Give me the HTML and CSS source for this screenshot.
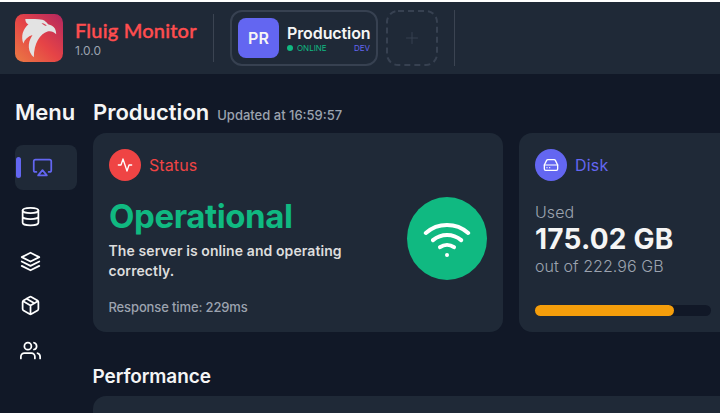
FILE: index.html
```html
<!DOCTYPE html>
<html lang="en">
<head>
<meta charset="utf-8">
<title>Fluig Monitor</title>
<link rel="stylesheet" href="styles.css">
</head>
<body>
<header class="topbar">
  <div class="brand">
    <svg class="logo" viewBox="0 0 48 48">
      <defs>
        <linearGradient id="lg" x1="0" y1="1" x2="1" y2="0">
          <stop offset="0" stop-color="#ea7b43"/><stop offset=".48" stop-color="#e64446"/><stop offset="1" stop-color="#b3265f"/>
        </linearGradient>
      </defs>
      <rect width="48" height="48" rx="8.500" fill="url(#lg)"/>
      <path fill="#e3e3e3" d="M10.300 5C16 5.300 22 4.200 27.500 5.800C30.200 6.700 31.500 8.500 33 10.200C37 11.200 41.300 13.300 41.200 20.300C38.500 17.400 35.500 16.600 32.500 17.500C25 20 19 29 18.800 43.300C13 38 11.800 29.500 17.500 21C13 22.500 9.800 25 8.300 29.500C5.800 22.500 7.700 15.300 13.400 10.300C11.300 9.300 10.300 7.500 10.300 5Z"/>
      <path d="M26.500 9.300C28.500 8.800 30.200 9.700 31.800 12C29.500 11.900 28.200 10.600 26.500 9.300Z" fill="#d4485a"/>
    </svg>
    <div>
      <div class="brand-name">Fluig Monitor</div>
      <div class="version">1.0.0</div>
    </div>
  </div>
  <div class="divider first"></div>
  <div class="env">
    <div class="env-badge">PR</div>
    <div class="env-info">
      <div class="env-name">Production</div>
      <div class="env-meta"><span class="online"><i class="dot"></i>ONLINE</span><span class="kind">DEV</span></div>
    </div>
  </div>
  <div class="add">
    <svg class="dash" viewBox="0 0 52 56"><rect x="1" y="1" width="50" height="54" rx="11"/></svg>
    <svg class="plus" viewBox="0 0 12 12"><path d="M6 .5v11M.5 6h11"/></svg>
  </div>
  <div class="divider second"></div>
</header>
<div class="layout">
  <nav class="menu">
    <h2 class="menu-title">Menu</h2>
    <a class="item active"><span class="marker"></span><svg class="icon" viewBox="0 0 24 24"><path d="M5 17H4a2 2 0 0 1-2-2V5a2 2 0 0 1 2-2h16a2 2 0 0 1 2 2v10a2 2 0 0 1-2 2h-1"/><path d="M12 15l5 6H7z"/></svg></a>
    <a class="item"><svg class="icon" viewBox="0 0 24 24"><ellipse cx="12" cy="5" rx="9" ry="3"/><path d="M21 12c0 1.660-4 3-9 3s-9-1.340-9-3M3 5v14c0 1.660 4 3 9 3s9-1.340 9-3V5"/></svg></a>
    <a class="item"><svg class="icon" viewBox="0 0 24 24"><path d="M12 2L2 7l10 5 10-5zM2 17l10 5 10-5M2 12l10 5 10-5"/></svg></a>
    <a class="item"><svg class="icon" viewBox="0 0 24 24"><path d="M16.500 9.400l-9-5.190M21 16V8a2 2 0 0 0-1-1.730l-7-4a2 2 0 0 0-2 0l-7 4A2 2 0 0 0 3 8v8a2 2 0 0 0 1 1.730l7 4a2 2 0 0 0 2 0l7-4A2 2 0 0 0 21 16zM3.270 6.960L12 12.010l8.730-5.050M12 22.080V12"/></svg></a>
    <a class="item"><svg class="icon" viewBox="0 0 24 24"><path d="M17 21v-2a4 4 0 0 0-4-4H5a4 4 0 0 0-4 4v2M23 21v-2a4 4 0 0 0-3-3.870M16 3.130a4 4 0 0 1 0 7.750"/><circle cx="9" cy="7" r="4"/></svg></a>
  </nav>
  <main class="content">
    <div class="heading"><h1 class="title">Production</h1><span class="updated">Updated at 16:59:57</span></div>
    <div class="cards">
      <section class="card status">
        <div class="card-head red"><span class="round"><svg viewBox="0 0 24 24"><path d="M22 12h-4l-3 9L9 3l-3 9H2"/></svg></span><span class="status-label">Status</span></div>
        <div class="status-body">
          <div>
            <div class="state">Operational</div>
            <p class="desc">The server is online and operating correctly.</p>
            <div class="response">Response time: 229ms</div>
          </div>
          <div class="wifi"><svg viewBox="0 0 24 24"><path d="M5 12.550a11 11 0 0 1 14.080 0M1.420 9a16 16 0 0 1 21.160 0M8.530 16.110a6 6 0 0 1 6.950 0M12 20h.01"/></svg></div>
        </div>
      </section>
      <section class="card disk">
        <div class="card-head indigo"><span class="round"><svg viewBox="0 0 24 24"><path d="M22 12H2" opacity=".7"/><path d="M5.450 5.110L2 12v6a2 2 0 0 0 2 2h16a2 2 0 0 0 2-2v-6l-3.450-6.890A2 2 0 0 0 16.760 4H7.240a2 2 0 0 0-1.790 1.110zM6 16h.01M10 16h.01"/></svg></span><span class="disk-label">Disk</span></div>
        <div class="used">Used</div>
        <div class="amount">175.02 GB</div>
        <div class="total">out of 222.96 GB</div>
        <div class="track"><div class="fill" style="width:78.900%"></div></div>
      </section>
    </div>
    <h2 class="section-title">Performance</h2>
    <section class="card performance"></section>
  </main>
</div>
</body>
</html>
```
FILE: styles.css
```css
* { box-sizing: border-box; }
body { margin: 0; height: 413px; overflow: hidden; background: #111827; border-top: 2px solid #fff; color: #f5f5f5; font-family: Inter, sans-serif; }
h1, h2, p { margin: 0; }
svg { display: block; fill: none; stroke: currentColor; stroke-width: 2; stroke-linecap: round; stroke-linejoin: round; }
.topbar { height: 72px; background: #1f2937; display: flex; align-items: flex-start; padding: 8px 0 0 15px; }
.brand { display: flex; gap: 12px; width: 198px; padding-top: 4px; }
.logo { width: 48px; height: 48px; stroke: none; }
.brand-name { font: 500 20px/24px Lato, Inter, sans-serif; letter-spacing: .2px; color: #ff4d4f; -webkit-text-stroke: .4px #ff4d4f; white-space: nowrap; padding-top: 5px; margin-top: -1px; margin-bottom: 1px; }
.version { font-size: 12px; line-height: 16px; color: #9ca3af; }
.divider { width: 1px; background: #3b4452; }
.first { height: 48px; margin-top: 4px; }
.second { height: 56px; margin-left: 16px; }
.env { width: 148px; height: 56px; margin-left: 16px; border: 2px solid #374151; border-radius: 12px; padding: 6px; display: flex; gap: 8px; }
.env-badge { width: 41px; height: 40px; flex: none; border-radius: 8px; background: #6366f1; display: flex; align-items: center; justify-content: center; font-size: 16px; font-weight: 600; }
.env-info { width: 83px; padding-top: 5px; }
.env-name { font-size: 16px; font-weight: 600; line-height: 20px; letter-spacing: -.1px; white-space: nowrap; }
.env-meta { display: flex; justify-content: space-between; font-size: 8px; line-height: 10px; }
.online { color: #10b981; display: flex; align-items: center; gap: 4px; }
.dot { width: 6px; height: 6px; border-radius: 50%; background: #10b981; }
.kind { color: #6366f1; }
.add { display: grid; width: 52px; height: 56px; margin-left: 8px; place-items: center; color: #374151; }
.add svg { grid-area: 1 / 1; }
.dash { width: 52px; height: 56px; stroke-dasharray: 6 4; stroke-linecap: butt; }
.plus { width: 12px; height: 12px; stroke-width: 1; }
.layout { display: flex; padding-left: 15px; gap: 16px; }
.menu { width: 62px; flex: none; }
.menu-title { font-size: 22px; font-weight: 600; line-height: 28px; margin: 24px 0 19px; }
.item { display: flex; align-items: center; height: 44.700px; padding-left: 5px; color: #fff; }
.active { height: 45px; background: #1f2937; color: #6366f1; border-radius: 8px; padding-left: 1px; margin-bottom: 4px; }
.marker { width: 5px; height: 21px; border-radius: 3px; background: #6366f1; margin-right: 11px; }
.icon { width: 21px; height: 21px; }
.content { width: 676px; flex: none; }
.heading { display: flex; align-items: baseline; gap: 9px; height: 35px; margin-top: 24px; }
.title { font-size: 22px; font-weight: 600; line-height: 28px; }
.updated { font-size: 13px; font-weight: 500; color: #9ca3af; margin-left: -1px; }
.cards { display: flex; gap: 16px; }
.card { background: #1f2937; border-radius: 13px; }
.status { width: 410px; height: 199px; padding: 16px; }
.disk { width: 250px; height: 199px; padding: 16px; }
.card-head { display: flex; align-items: center; gap: 8px; font-size: 16px; line-height: 32px; }
.red { color: #ef4444; }
.indigo { color: #6366f1; }
.status-label { letter-spacing: .1px; }
.disk-label { letter-spacing: .2px; }
.round { width: 32px; height: 32px; border-radius: 50%; display: grid; place-items: center; }
.round svg { width: 16px; height: 16px; color: #fff; }
.red .round { background: #ef4444; }
.indigo .round { background: #6366f1; }
.status-body { display: flex; justify-content: space-between; }
.state { color: #10b981; font-size: 33px; font-weight: 700; line-height: 40px; margin-top: 15px; letter-spacing: -.4px; }
.desc { width: 250px; font-size: 14px; font-weight: 600; line-height: 20px; letter-spacing: .09px; color: #ddd; margin: 5px 0 0 -.5px; }
.response { font-size: 13px; font-weight: 500; line-height: 20px; letter-spacing: -.13px; color: #9ca3af; margin: 16px 0 0 -.5px; }
.wifi { width: 80px; height: 83px; border-radius: 50%; background: #10b981; color: #fff; margin-top: 16px; display: grid; place-items: center; }
.wifi svg { width: 48px; height: 48px; }
.used { font-size: 16px; line-height: 20px; margin-top: 21px; color: #9ca3af; font-weight: 300; letter-spacing: .1px; }
.amount { font-size: 28px; line-height: 32px; font-weight: 700; letter-spacing: .2px; margin-top: 1px; }
.total { font-size: 16px; line-height: 22px; font-weight: 300; color: #9ca3af; letter-spacing: .07px; }
.track { width: 176px; height: 11px; margin-top: 28px; border-radius: 6px; background: #111827; }
.fill { height: 100%; border-radius: 6px; background: #f59e0b; }
.section-title { font-size: 19px; font-weight: 600; line-height: 24px; letter-spacing: -.1px; margin: 33px 0 7px -.5px; }
.performance { height: 120px; }
```
